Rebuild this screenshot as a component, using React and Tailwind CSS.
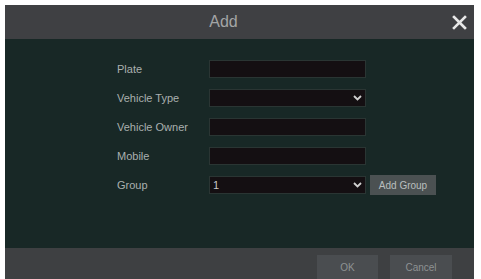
export default function App() {
  const fields = [
    { label: 'Plate' },
    { label: 'Vehicle Type', select: true },
    { label: 'Vehicle Owner' },
    { label: 'Mobile' },
    { label: 'Group', select: true, value: '1', extra: true },
  ];

  return (
    <div
      className="w-[481px] h-[279px] bg-white pt-[5px] pl-[5px] pr-[7px]"
      style={{ fontFamily: '"Liberation Sans", Arial, sans-serif' }}
    >
      <div className="h-full flex flex-col bg-[#182826]">
        <div className="h-[34px] bg-[#3f4043] flex items-center justify-center pr-[32px] relative">
          <span className="text-[16px] text-[#a3a5a6]">Add</span>
          <svg
            className="absolute right-[7px] top-[10px]"
            width="15"
            height="15"
            viewBox="0 0 15 15"
          >
            <path d="M2 2 L13 13 M13 2 L2 13" stroke="#e8e8e8" strokeWidth="2.6" strokeLinecap="square" />
          </svg>
        </div>

        <div className="flex-1 pt-[21px] pl-[112px] flex flex-col gap-[11px]">
          {fields.map((f) => (
            <div key={f.label} className="flex items-center h-[18px]">
              <span className="w-[92px] text-[11px] text-[#aab0af]">{f.label}</span>
              <div className="w-[157px] h-[18px] bg-[#140f12] border border-[#2a3533] flex items-center justify-between px-[3px]">
                <span className="text-[11px] text-[#c8c8c8]">{f.value || ''}</span>
                {f.select && (
                  <svg width="9" height="6" viewBox="0 0 9 6">
                    <path d="M1 1 L4.5 4.5 L8 1" stroke="#d0d0d0" strokeWidth="1.8" fill="none" />
                  </svg>
                )}
              </div>
              {f.extra && (
                <div className="ml-[4px] w-[66px] h-[20px] bg-[#4b5152] flex items-center justify-center text-[10px] text-[#b9bfbe]">
                  Add Group
                </div>
              )}
            </div>
          ))}
        </div>

        <div className="h-[31px] bg-[#3e4042] flex items-end justify-end gap-[12px] pr-[22px]">
          <div className="w-[61px] h-[24px] bg-[#4a4d50] flex items-center justify-center text-[10px] text-[#8e9293]">
            OK
          </div>
          <div className="w-[62px] h-[24px] bg-[#4a4d50] flex items-center justify-center text-[10px] text-[#8e9293]">
            Cancel
          </div>
        </div>
      </div>
    </div>
  );
}
